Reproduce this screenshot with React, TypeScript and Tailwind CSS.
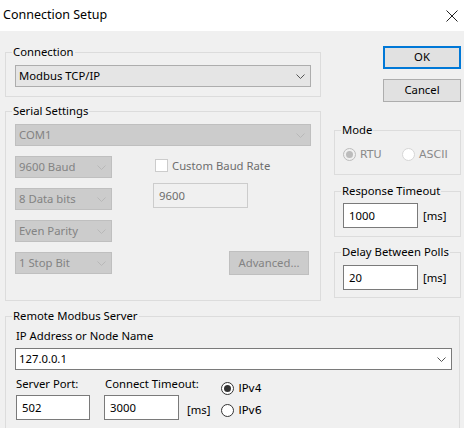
import React from 'react';

function Chevron({ color = '#000000' }: { color?: string }) {
  return (
    <svg width="9" height="5" viewBox="0 0 9 5" className="shrink-0">
      <path d="M0.5 0.5 L4.5 4.5 L8.5 0.5" fill="none" stroke={color} strokeWidth="1" />
    </svg>
  );
}

type ComboKind = 'readonly' | 'disabled' | 'edit';

function Combo({ text, className = '', kind = 'readonly' }: { text: string; className?: string; kind?: ComboKind }) {
  const look =
    kind === 'disabled'
      ? 'bg-[#cccccc] border-[#bfbfbf] text-[#838383]'
      : kind === 'edit'
        ? 'bg-white border-[#7a7a7a] text-black'
        : 'bg-[#e5e5e5] border-[#adadad] text-black';
  return (
    <div className={`flex items-center justify-between h-[22px] border pl-[3px] pr-[5px] ${look} ${className}`}>
      <span className="leading-none whitespace-nowrap">{text}</span>
      <Chevron color={kind === 'disabled' ? '#b8b8b8' : '#555555'} />
    </div>
  );
}

function TextBox({ value, className = '', disabled = false }: { value: string; className?: string; disabled?: boolean }) {
  return (
    <div
      className={`flex items-center h-[25px] border pl-[5px] ${
        disabled ? 'bg-[#f0f0f0] border-[#cccccc] text-[#6d6d6d]' : 'bg-white border-[#7a7a7a] text-black'
      } ${className}`}
    >
      <span className="leading-none">{value}</span>
    </div>
  );
}

function Group({ title, children, className = '' }: { title: string; children: React.ReactNode; className?: string }) {
  return (
    <fieldset className={`border border-[#dcdcdc] ${className}`}>
      <legend className="ml-[6px] px-[1px] leading-[16px] h-[16px]">{title}</legend>
      {children}
    </fieldset>
  );
}

function Radio({ label, checked, disabled = false }: { label: string; checked: boolean; disabled?: boolean }) {
  const ring = disabled ? (checked ? 'border-[#bcbcbc] bg-[#f0f0f0]' : 'border-[#d6d6d6] bg-white') : 'border-[#333333] bg-white';
  const dot = disabled ? 'bg-[#bcbcbc]' : 'bg-[#333333]';
  return (
    <div className="flex items-center h-[16px]">
      <span className={`flex items-center justify-center w-[13px] h-[13px] rounded-full border ${ring}`}>
        {checked && <span className={`w-[7px] h-[7px] rounded-full ${dot}`} />}
      </span>
      <span
        className={`ml-[4px] font-['DejaVu_Sans',sans-serif] text-[11px] leading-none ${disabled ? 'text-[#8a8a8a]' : 'text-black'}`}
      >
        {label}
      </span>
    </div>
  );
}

function Button({ label, primary = false, disabled = false, className = '' }: { label: string; primary?: boolean; disabled?: boolean; className?: string }) {
  const look = disabled
    ? 'bg-[#cccccc] border border-[#bfbfbf] text-[#838383]'
    : primary
      ? 'bg-[#e1e1e1] border-2 border-[#0078d7] text-black'
      : 'bg-[#e1e1e1] border border-[#adadad] text-black';
  return <div className={`flex items-center justify-center ${look} ${className}`}>{label}</div>;
}

export default function App() {
  return (
    <div className="w-[464px] h-[428px] overflow-hidden bg-[#f0f0f0] text-[11.3px] text-black font-['Noto_Sans','Open_Sans',sans-serif]">
      {/* title bar */}
      <div className="flex items-center justify-between h-[31px] bg-white pl-[3px] pr-[6px]">
        <span className="text-[12.5px] leading-none">Connection Setup</span>
        <svg width="12" height="12" viewBox="0 0 12 12">
          <path d="M0.5 0.5 L11.5 11.5 M11.5 0.5 L0.5 11.5" stroke="#222222" strokeWidth="1" />
        </svg>
      </div>

      <div className="flex pl-[5px] pt-[13px]">
        {/* left column */}
        <div className="w-[316px]">
          <Group title="Connection">
            <div className="pl-[9px] pr-[9px] pt-[5px] pb-[9px]">
              <Combo text="Modbus TCP/IP" className="w-[296px]" />
            </div>
          </Group>

          <Group title="Serial Settings" className="mt-[6px]">
            <div className="pl-[9px] pr-[8px] pt-[5px] pb-[25px]">
              <Combo text="COM1" kind="disabled" className="w-[296px]" />
              <div className="flex mt-[10px]">
                <div className="flex flex-col gap-[10px] w-[97px]">
                  <Combo text="9600 Baud" kind="disabled" />
                  <Combo text="8 Data bits" kind="disabled" />
                  <Combo text="Even Parity" kind="disabled" />
                  <Combo text="1 Stop Bit" kind="disabled" />
                </div>
                <div className="ml-[41px] w-[158px] flex flex-col">
                  <div className="flex items-center h-[13px] mt-[3px] ml-[2px]">
                    <span className="w-[13px] h-[13px] border border-[#cccccc] bg-white" />
                    <span className="ml-[4px] text-[#6d6d6d] leading-none">Custom Baud Rate</span>
                  </div>
                  <TextBox value="9600" disabled className="w-[95px] mt-[11px]" />
                  <div className="flex justify-end mt-[43px] mr-[2px]">
                    <Button label="Advanced..." disabled className="w-[80px] h-[24px]" />
                  </div>
                </div>
              </div>
            </div>
          </Group>
        </div>

        {/* right column */}
        <div className="w-[127px] ml-[13px]">
          <div className="flex flex-col items-end mt-[2px]">
            <Button label="OK" primary className="w-[78px] h-[23px]" />
            <Button label="Cancel" className="w-[78px] h-[23px] mt-[10px]" />
          </div>

          <Group title="Mode" className="mt-[20px]">
            <div className="flex pl-[8px] pt-[8px] pb-[12px]">
              <div className="w-[59px]">
                <Radio label="RTU" checked disabled />
              </div>
              <Radio label="ASCII" checked={false} disabled />
            </div>
          </Group>

          <Group title="Response Timeout" className="mt-[8px]">
            <div className="flex items-center pl-[8px] pt-[4px] pb-[8px]">
              <TextBox value="1000" className="w-[75px]" />
              <span className="ml-[5px] leading-none">[ms]</span>
            </div>
          </Group>

          <Group title="Delay Between Polls" className="mt-[7px]">
            <div className="flex items-center pl-[8px] pt-[5px] pb-[7px]">
              <TextBox value="20" className="w-[75px]" />
              <span className="ml-[5px] leading-none">[ms]</span>
            </div>
          </Group>
        </div>
      </div>

      {/* remote server */}
      <div className="pl-[5px] pt-[7px]">
        <Group title="Remote Modbus Server" className="w-[455px]">
          <div className="pl-[10px] pr-[7px] pb-[20px]">
            <div className="mt-[4px] leading-[16px]">IP Address or Node Name</div>
            <Combo text="127.0.0.1" kind="edit" className="mt-[4px] -ml-[1px] w-[437px]" />
            <div className="flex mt-[6px]">
              <div className="w-[74px]">
                <div className="leading-[16px]">Server Port:</div>
                <TextBox value="502" className="mt-[3px]" />
              </div>
              <div className="ml-[14px]">
                <div className="leading-[16px] ml-[1px]">Connect Timeout:</div>
                <div className="flex items-center mt-[3px]">
                  <TextBox value="3000" className="w-[75px]" />
                  <span className="ml-[8px] leading-none mt-[4px]">[ms]</span>
                </div>
              </div>
              <div className="ml-[11px] mt-[4px] flex flex-col gap-[6px]">
                <Radio label="IPv4" checked />
                <Radio label="IPv6" checked={false} />
              </div>
            </div>
          </div>
        </Group>
      </div>
    </div>
  );
}
